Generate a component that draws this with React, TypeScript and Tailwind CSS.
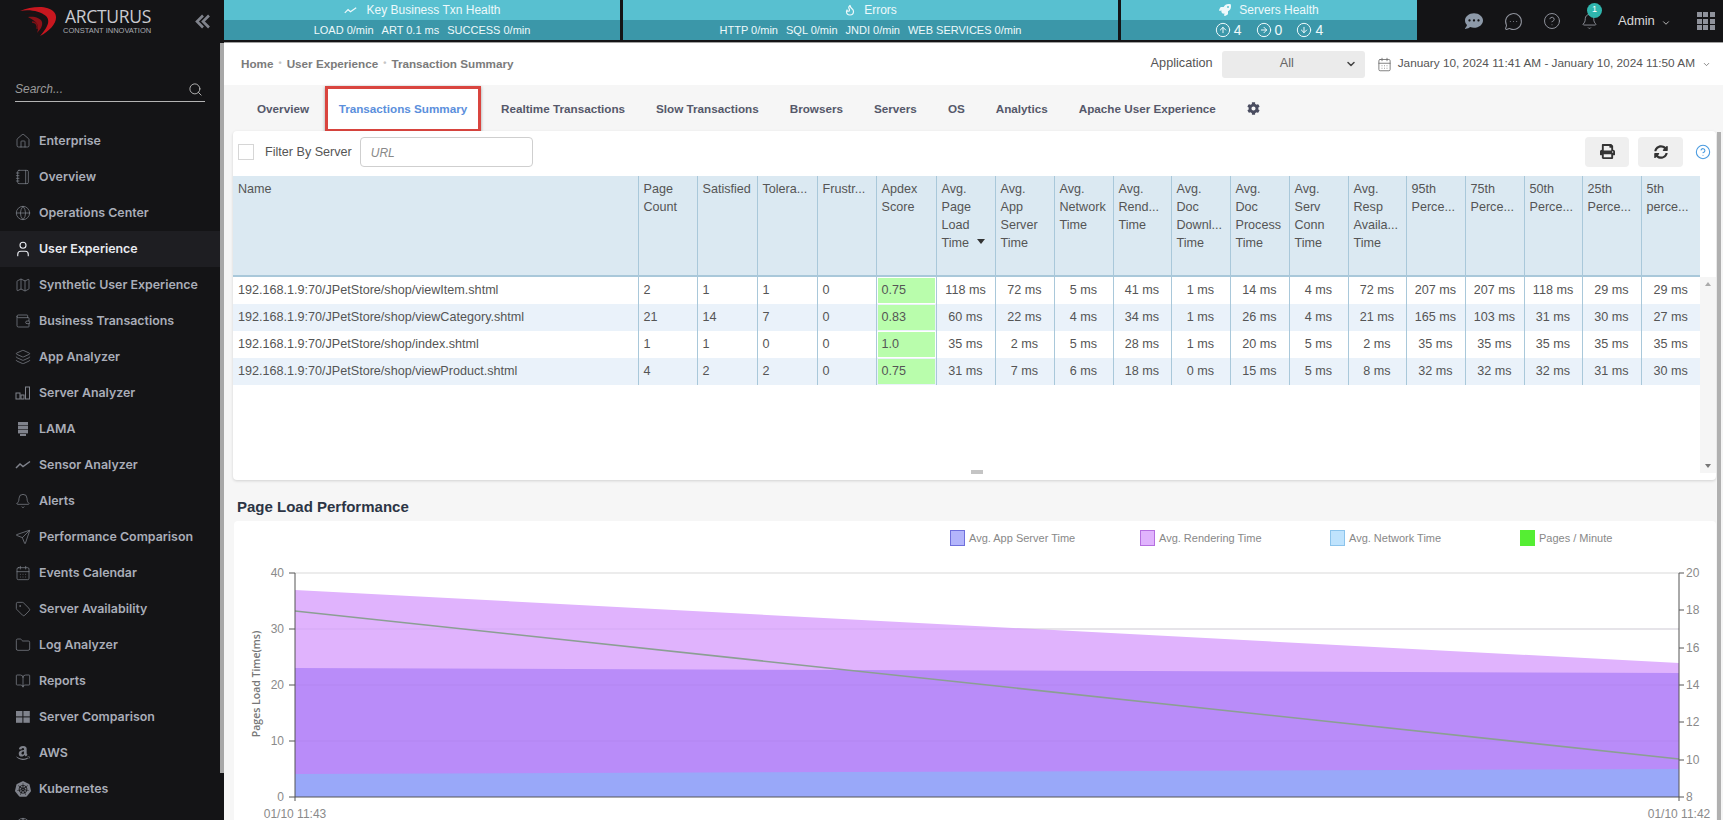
import React from 'react';
import {
  House, Notebook, Globe, User, Map as MapIcon, Wallet, Layers, Bell, Send, CalendarDays, Tag, Folder, BookOpen,
  Search, ChevronDown, CircleHelp, CircleArrowUp, CircleArrowRight, CircleArrowDown, MessageCircleMore, Flame,
} from 'lucide-react';
import { FaAmazon, FaCog, FaCommentDots, FaPrint, FaRocket, FaSyncAlt } from 'react-icons/fa';
import { SiKubernetes } from 'react-icons/si';

const cls = 'w-[16px] h-[16px]';

const BarsIcon = () => (
  <svg viewBox="0 0 16 16" className={cls} fill="none" stroke="currentColor" strokeWidth="1">
    <rect x="1" y="8" width="4" height="6" /><rect x="6" y="10" width="3" height="4" /><rect x="10.5" y="2" width="4" height="12" />
  </svg>
);
const StackIcon = () => (
  <svg viewBox="0 0 16 16" className={cls} fill="currentColor">
    <rect x="3" y="1" width="10" height="3.4" /><rect x="3" y="5" width="10" height="3.4" /><rect x="3" y="9" width="10" height="3.4" /><rect x="5" y="13" width="6" height="2" />
  </svg>
);
const TilesIcon = () => (
  <svg viewBox="0 0 16 16" className={cls} fill="currentColor">
    <rect x="1" y="2" width="6.4" height="5.4" /><rect x="8.4" y="2" width="6.4" height="5.4" /><rect x="1" y="8.4" width="6.4" height="5.4" /><rect x="8.4" y="8.4" width="6.4" height="5.4" />
  </svg>
);
const SquiggleIcon = ({ className }: { className: string }) => (
  <svg viewBox="0 0 16 10" className={className} fill="none" stroke="currentColor" strokeWidth="1.5">
    <path d="M1 8 L5 4 L8 6.5 L15 1.5" />
  </svg>
);

const navItems: { label: string; icon: React.ReactNode; active?: boolean }[] = [
  { label: 'Enterprise', icon: <House className={cls} strokeWidth={1.1} /> },
  { label: 'Overview', icon: <Notebook className={cls} strokeWidth={1.1} /> },
  { label: 'Operations Center', icon: <Globe className={cls} strokeWidth={1.1} /> },
  { label: 'User Experience', icon: <User className="w-[18px] h-[18px] -ml-[1px]" strokeWidth={1.5} />, active: true },
  { label: 'Synthetic User Experience', icon: <MapIcon className={cls} strokeWidth={1.1} /> },
  { label: 'Business Transactions', icon: <Wallet className={cls} strokeWidth={1.1} /> },
  { label: 'App Analyzer', icon: <Layers className={cls} strokeWidth={1.1} /> },
  { label: 'Server Analyzer', icon: <BarsIcon /> },
  { label: 'LAMA', icon: <StackIcon /> },
  { label: 'Sensor Analyzer', icon: <SquiggleIcon className={cls} /> },
  { label: 'Alerts', icon: <Bell className={cls} strokeWidth={1.1} /> },
  { label: 'Performance Comparison', icon: <Send className={cls} strokeWidth={1.1} /> },
  { label: 'Events Calendar', icon: <CalendarDays className={cls} strokeWidth={1.1} /> },
  { label: 'Server Availability', icon: <Tag className={cls} strokeWidth={1.1} /> },
  { label: 'Log Analyzer', icon: <Folder className={cls} strokeWidth={1.1} /> },
  { label: 'Reports', icon: <BookOpen className={cls} strokeWidth={1.1} /> },
  { label: 'Server Comparison', icon: <TilesIcon /> },
  { label: 'AWS', icon: <FaAmazon className={cls} /> },
  { label: 'Kubernetes', icon: <SiKubernetes className={cls} /> },
  { label: '', icon: <Globe className={cls} strokeWidth={1.1} /> },
];

const tabs = ['Overview', 'Transactions Summary', 'Realtime Transactions', 'Slow Transactions', 'Browsers', 'Servers', 'OS', 'Analytics', 'Apache User Experience'];

const colWidths = [
  'w-[59px]', 'w-[60px]', 'w-[60px]', 'w-[59px]', 'w-[60px]', 'w-[59px]', 'w-[59px]', 'w-[59px]', 'w-[58px]',
  'w-[59px]', 'w-[59px]', 'w-[59px]', 'w-[58px]', 'w-[59px]', 'w-[59px]', 'w-[58px]', 'w-[59px]', 'w-[59px]',
];

const headers = [
  ['Page', 'Count'], ['Satisfied'], ['Tolera...'], ['Frustr...'], ['Apdex', 'Score'], ['Avg.', 'Page', 'Load', 'Time'],
  ['Avg.', 'App', 'Server', 'Time'], ['Avg.', 'Network', 'Time'], ['Avg.', 'Rend...', 'Time'], ['Avg.', 'Doc', 'Downl...', 'Time'],
  ['Avg.', 'Doc', 'Process', 'Time'], ['Avg.', 'Serv', 'Conn', 'Time'], ['Avg.', 'Resp', 'Availa...', 'Time'],
  ['95th', 'Perce...'], ['75th', 'Perce...'], ['50th', 'Perce...'], ['25th', 'Perce...'], ['5th', 'perce...'],
];

const rows = [
  ['192.168.1.9:70/JPetStore/shop/viewItem.shtml', '2', '1', '1', '0', '0.75', '118', '72', '5', '41', '1', '14', '4', '72', '207', '207', '118', '29', '29'],
  ['192.168.1.9:70/JPetStore/shop/viewCategory.shtml', '21', '14', '7', '0', '0.83', '60', '22', '4', '34', '1', '26', '4', '21', '165', '103', '31', '30', '27'],
  ['192.168.1.9:70/JPetStore/shop/index.shtml', '1', '1', '0', '0', '1.0', '35', '2', '5', '28', '1', '20', '5', '2', '35', '35', '35', '35', '35'],
  ['192.168.1.9:70/JPetStore/shop/viewProduct.shtml', '4', '2', '2', '0', '0.75', '31', '7', '6', '18', '0', '15', '5', '8', '32', '32', '32', '31', '30'],
];

const legend = [
  { label: 'Avg. App Server Time', box: 'bg-[#b3b5fb] border-[#6f70dc]', w: 'w-[190px]' },
  { label: 'Avg. Rendering Time', box: 'bg-[#e0b3fd] border-[#b56fe0]', w: 'w-[190px]' },
  { label: 'Avg. Network Time', box: 'bg-[#bfe3fd] border-[#8cc4ec]', w: 'w-[190px]' },
  { label: 'Pages / Minute', box: 'bg-[#55ee33] border-[#55ee33]', w: 'w-[96px]' },
];

const Logo = () => (
  <svg viewBox="0 0 38 30" className="w-[38px] h-[30px]" fill="none">
    <path d="M0 5 C12 0 28 -1 34 6 C40 13 32 24 20 30 C27 22 31 15 26 10 C20 5 9 3 0 5Z" fill="#c8171f" />
    <path d="M5 8 C13 6 23 8 25 13 C27 18 23 24 18 28" stroke="#2a0c0e" strokeWidth="1" />
    <path d="M8 11 C14 10 21 12 22 16 C23 20 20 24 17 27 C19 22 18 18 15 15.5 C13 14 10 12 8 11Z" fill="#8c1218" />
    <path d="M12 16 C16 16 18 19 17 23" stroke="#7a1015" strokeWidth="1.4" />
  </svg>
);

const Chart = () => (
  <svg viewBox="234 555 1482 265" className="w-[1482px] h-[265px] block">
    <line x1="295" y1="573" x2="1679" y2="573" stroke="#d9d9d9" />
    <line x1="295" y1="629" x2="1679" y2="629" stroke="#d9d9d9" />
    <line x1="295" y1="685" x2="1679" y2="685" stroke="#d9d9d9" />
    <line x1="295" y1="741" x2="1679" y2="741" stroke="#d9d9d9" />
    <polygon points="295,590 1679,663 1679,797 295,797" fill="#e0b3fd" />
    <polygon points="295,668 1679,673 1679,797 295,797" fill="#b98cf9" />
    <polygon points="295,774 1679,769 1679,797 295,797" fill="#99a8f9" />
    <line x1="295" y1="629" x2="1679" y2="629" stroke="#8a5fc0" strokeOpacity="0.12" />
    <line x1="295" y1="685" x2="1679" y2="685" stroke="#8a5fc0" strokeOpacity="0.12" />
    <line x1="295" y1="741" x2="1679" y2="741" stroke="#8a5fc0" strokeOpacity="0.12" />
    <line x1="295" y1="611" x2="1679" y2="759" stroke="#8b9f93" strokeWidth="1.6" />
    <path d="M295 573V801M295 797H1679M1679 573V801" stroke="#555" strokeWidth="1" fill="none" />
    {[573, 629, 685, 741, 797].map((y) => <line key={y} x1="289" y1={y} x2="295" y2={y} stroke="#555" />)}
    {[573, 610, 648, 685, 722, 760, 797].map((y) => <line key={y} x1="1679" y1={y} x2="1684" y2={y} stroke="#555" />)}
    <g fontFamily="'Liberation Sans', sans-serif" fontSize="12" fill="#8a8a8a">
      {[['40', 577], ['30', 633], ['20', 689], ['10', 745], ['0', 801]].map(([t, y]) => (
        <text key={t} x="284" y={y} textAnchor="end">{t}</text>
      ))}
      {[['20', 577], ['18', 614], ['16', 652], ['14', 689], ['12', 726], ['10', 764], ['8', 801]].map(([t, y]) => (
        <text key={t} x="1686" y={y}>{t}</text>
      ))}
      <text x="295" y="818" textAnchor="middle">01/10 11:43</text>
      <text x="1679" y="818" textAnchor="middle">01/10 11:42</text>
    </g>
    <text transform="translate(260 684) rotate(-90)" textAnchor="middle" fontFamily="'Open Sans', sans-serif" fontSize="10.5" fontWeight="600" fill="#777">Pages Load Time(ms)</text>
  </svg>
);

export default function App() {
  return (
    <div className="relative flex w-[1723px] h-[820px] overflow-hidden bg-[#f6f6f6] font-['Liberation_Sans',Arial,sans-serif]">
      <aside className="flex w-[224px] shrink-0 bg-[#141416]">
        <div className="w-[220px] shrink-0">
          <div className="flex h-[42px] items-center pl-[20px] pr-[9px]">
            <Logo />
            <div className="ml-[7px] flex flex-col leading-none text-[#c9cbd0]">
              <span className="font-['Open_Sans',sans-serif] text-[17.5px] leading-[18px] tracking-[-0.3px]">ARCTURUS</span>
              <span className="-ml-[2px] mt-[1px] text-[7.5px] leading-[9px] whitespace-nowrap text-[#a9abb0]">CONSTANT INNOVATION</span>
            </div>
            <svg viewBox="0 0 16 14" className="ml-auto w-[16px] h-[15px] text-[#80838c]" fill="none" stroke="currentColor" strokeWidth="2.6">
              <path d="M8 1 L2 7 L8 13M14 1 L8 7 L14 13" />
            </svg>
          </div>
          <div className="mx-[15px] mt-[36px] flex h-[24px] items-center justify-between border-b border-[#b4b4b4] pb-[1px] pr-[2px]">
            <span className="text-[12px] italic text-[#9a9a9a]">Search...</span>
            <Search className="w-[15px] h-[15px] text-[#b9b9b9]" strokeWidth={1.5} />
          </div>
          <nav className="mt-[21px]">
            {navItems.map((it) => (
              <div
                key={it.label}
                className={`flex h-[36px] items-center pl-[15px] font-['Inter',sans-serif] text-[12.4px] font-semibold whitespace-nowrap ${it.active ? 'bg-[#1e1e22] text-[#e8eaf0]' : 'text-[#a9adb8]'}`}
              >
                <span className={`flex w-[24px] ${it.active ? 'text-[#e8eaf0]' : 'text-[#80838c]'}`}>{it.icon}</span>
                {it.label}
              </div>
            ))}
          </nav>
        </div>
        <div className="mt-[43px] h-[730px] w-[4px] bg-[#a8a8a8]" />
      </aside>

      <main className="flex w-[1499px] flex-col">
        <header className="flex h-[43px] shrink-0 bg-[#141416] border-b border-[#a0a0a0]">
          <div className="flex h-[40px] w-[396px] flex-col text-[#eef9fb]">
            <div className="flex h-[20px] items-center justify-center gap-[10px] bg-[#58c0d0] text-[12px]"><SquiggleIcon className="w-[13px] h-[9px]" />Key Business Txn Health</div>
            <div className="flex h-[20px] items-center justify-center gap-[8px] bg-[#3b97a9] text-[11px]"><span>LOAD 0/min</span><span>ART 0.1 ms</span><span>SUCCESS 0/min</span></div>
          </div>
          <div className="ml-[3px] flex h-[40px] w-[495px] flex-col text-[#eef9fb]">
            <div className="flex h-[20px] items-center justify-center gap-[8px] bg-[#58c0d0] text-[12px]"><Flame className="w-[12px] h-[12px]" strokeWidth={2.4} />Errors</div>
            <div className="flex h-[20px] items-center justify-center gap-[8px] bg-[#3b97a9] text-[11px]"><span>HTTP 0/min</span><span>SQL 0/min</span><span>JNDI 0/min</span><span>WEB SERVICES 0/min</span></div>
          </div>
          <div className="ml-[3px] flex h-[40px] w-[296px] flex-col text-[#eef9fb]">
            <div className="flex h-[20px] items-center justify-center gap-[8px] bg-[#58c0d0] text-[12px]"><FaRocket className="w-[12px] h-[12px]" />Servers Health</div>
            <div className="flex h-[20px] items-center justify-center gap-[14px] bg-[#3b97a9] text-[14px]">
              <span className="flex items-center gap-[3px]"><CircleArrowUp className="w-[16px] h-[16px]" strokeWidth={1.5} />4</span>
              <span className="flex items-center gap-[3px]"><CircleArrowRight className="w-[16px] h-[16px]" strokeWidth={1.5} />0</span>
              <span className="flex items-center gap-[3px]"><CircleArrowDown className="w-[16px] h-[16px]" strokeWidth={1.5} />4</span>
            </div>
          </div>
          <div className="flex flex-1 items-center pl-[48px] text-[#8f929b]">
            <FaCommentDots className="w-[18px] h-[18px] text-[#8d99a8]" />
            <MessageCircleMore className="ml-[21px] w-[19px] h-[19px]" strokeWidth={1.3} />
            <CircleHelp className="ml-[20px] w-[18px] h-[18px]" strokeWidth={1.3} />
            <span className="relative ml-[20px] flex">
              <Bell className="w-[17px] h-[17px]" strokeWidth={1.3} />
              <span className="absolute left-[6px] top-[-10px] flex h-[15px] w-[15px] items-center justify-center rounded-full bg-[#2fb5ad] text-[9px] text-white">1</span>
            </span>
            <span className="ml-[20px] text-[13px] text-[#d8d8d8]">Admin</span>
            <ChevronDown className="ml-[6px] mt-[4px] w-[10px] h-[10px] text-[#d8d8d8]" strokeWidth={2} />
            <span className="ml-[26px] grid grid-cols-3 gap-[1.5px]">
              {Array.from({ length: 9 }).map((_, i) => <span key={i} className="block w-[5px] h-[5px] bg-[#8f929b]" />)}
            </span>
          </div>
        </header>

        <div className="flex h-[42px] shrink-0 items-center bg-white pl-[17px] pr-[12px]">
          <div className="flex items-center gap-[5px] text-[11.7px] font-bold text-[#7b7b7b]">
            <span>Home</span><span className="text-[#c5c5c5] text-[9px]">•</span>
            <span>User Experience</span><span className="text-[#c5c5c5] text-[9px]">•</span>
            <span>Transaction Summary</span>
          </div>
          <span className="ml-auto text-[12.7px] text-[#555]">Application</span>
          <div className="ml-[9px] flex h-[27px] w-[143px] items-center rounded-[3px] bg-[#ebebeb] pl-[58px] pr-[8px] text-[12.7px] text-[#666]">
            All<ChevronDown className="ml-auto w-[12px] h-[12px] text-[#444]" strokeWidth={3} />
          </div>
          <CalendarDays className="ml-[12px] w-[15px] h-[15px] text-[#666]" strokeWidth={1.3} />
          <span className="ml-[6px] text-[11.8px] text-[#555] whitespace-nowrap">January 10, 2024 11:41 AM - January 10, 2024 11:50 AM</span>
          <ChevronDown className="ml-[7px] w-[9px] h-[9px] text-[#666]" strokeWidth={2} />
        </div>

        <div className="flex h-[46px] shrink-0 items-center pl-[33px] pt-[1px] text-[11.7px]">
          {tabs.map((t) => (
            t === 'Transactions Summary' ? (
              <span key={t} className="-ml-[15px] mr-[20px] flex h-[46px] w-[156px] items-center justify-center border-[3px] border-[#d9453f] bg-white font-bold text-[#5b8fdc] shadow-[0_1px_3px_rgba(0,0,0,0.35)] whitespace-nowrap">{t}</span>
            ) : (
              <span key={t} className="mr-[31px] font-bold text-[#55586a] whitespace-nowrap">{t}</span>
            )
          ))}
          <FaCog className="w-[13px] h-[13px] text-[#4a4d60]" />
        </div>

        <div className="ml-[9px] w-[1483px] h-[349px] shrink-0 rounded-[4px] bg-white shadow-[0_1px_3px_rgba(0,0,0,0.15)]">
          <div className="flex h-[45px] items-center pl-[5px] pr-[5px] pb-[4px]">
            <span className="h-[16px] w-[16px] border border-[#d6d6d6] bg-white" />
            <span className="ml-[11px] pt-[2px] text-[12.6px] text-[#555]">Filter By Server</span>
            <div className="ml-[8px] flex h-[30px] w-[173px] items-center rounded-[4px] border border-[#cfcfcf] pl-[10px] pt-[2px] text-[12px] italic text-[#888]">URL</div>
            <button className="ml-auto flex h-[30px] w-[44px] items-center justify-center rounded-[4px] bg-[#efefef]"><FaPrint className="w-[15px] h-[15px] text-[#333]" /></button>
            <button className="ml-[9px] flex h-[30px] w-[45px] items-center justify-center rounded-[4px] bg-[#efefef]"><FaSyncAlt className="w-[14px] h-[14px] text-[#333]" /></button>
            <CircleHelp className="ml-[12px] w-[16px] h-[16px] text-[#4a9be0]" strokeWidth={1.6} />
          </div>
          <div className="flex">
            <div className="w-[1467px] shrink-0">
              <table className="w-[1467px] table-fixed border-collapse text-[12.6px] text-[#555]">
                <colgroup>
                  <col className="w-[405px]" />
                  {colWidths.map((w, i) => <col key={i} className={w} />)}
                </colgroup>
                <thead>
                  <tr className="h-[100px] border-b-2 border-[#a9c8da] bg-[#dbe9f2]">
                    <th className="align-top pl-[5px] pt-[4px] text-left font-normal leading-[18px]">Name</th>
                    {headers.map((h, i) => (
                      <th key={i} className="relative align-top border-l border-[#a9c8da] pl-[5px] pt-[4px] text-left font-normal leading-[18px] whitespace-nowrap">
                        {h.map((l) => <div key={l}>{l}</div>)}
                        {i === 5 && <span className="absolute right-[10px] top-[63px] h-0 w-0 border-x-[4px] border-t-[5px] border-x-transparent border-t-[#333]" />}
                      </th>
                    ))}
                  </tr>
                  <tr className="h-[1px]" />
                </thead>
                <tbody>
                  {rows.map((r, ri) => (
                    <tr key={ri} className={`h-[27px] ${ri % 2 ? 'bg-[#eaf2fa]' : 'bg-white'}`}>
                      {r.map((c, ci) => {
                        if (ci === 0) return <td key={ci} className="pl-[5px] whitespace-nowrap">{c}</td>;
                        if (ci === 5) return (
                          <td key={ci} className="border-l border-[#a9c8da] p-[1px]">
                            <div className="flex h-[25px] items-center bg-[#b9fdac] pl-[4px]">{c}</div>
                          </td>
                        );
                        if (ci < 5) return <td key={ci} className="border-l border-[#a9c8da] pl-[5px]">{c}</td>;
                        return <td key={ci} className="border-l border-[#a9c8da] text-center whitespace-nowrap">{c} ms</td>;
                      })}
                    </tr>
                  ))}
                </tbody>
              </table>
            </div>
            <div className="mt-[101px] flex h-[196px] w-[16px] flex-col items-center justify-between bg-[#f5f5f5] py-[5px]">
              <span className="h-0 w-0 border-x-[3px] border-b-[4px] border-x-transparent border-b-[#aaa]" />
              <span className="h-0 w-0 border-x-[3px] border-t-[4px] border-x-transparent border-t-[#777]" />
            </div>
          </div>
          <div className="relative">
            <span className="absolute left-[738px] bottom-[-1px] h-[4px] w-[12px] bg-[#c4c4c4]" />
          </div>
        </div>

        <h2 className="ml-[13px] mt-[18px] h-[23px] text-[15px] font-bold leading-[18px] text-[#2c3545]">Page Load Performance</h2>

        <div className="ml-[10px] w-[1482px] flex-1 rounded-t-[4px] bg-white">
          <div className="flex h-[34px] items-center pl-[716px]">
            {legend.map((l) => (
              <div key={l.label} className={`flex items-center ${l.w}`}>
                <span className={`h-[16px] w-[15px] border ${l.box}`} />
                <span className="ml-[4px] text-[11px] text-[#888] whitespace-nowrap">{l.label}</span>
              </div>
            ))}
          </div>
          <Chart />
        </div>
      </main>
      <div className="absolute left-[1717px] top-[132px] h-[688px] w-[4px] bg-[#b0b0b0]" />
    </div>
  );
}
